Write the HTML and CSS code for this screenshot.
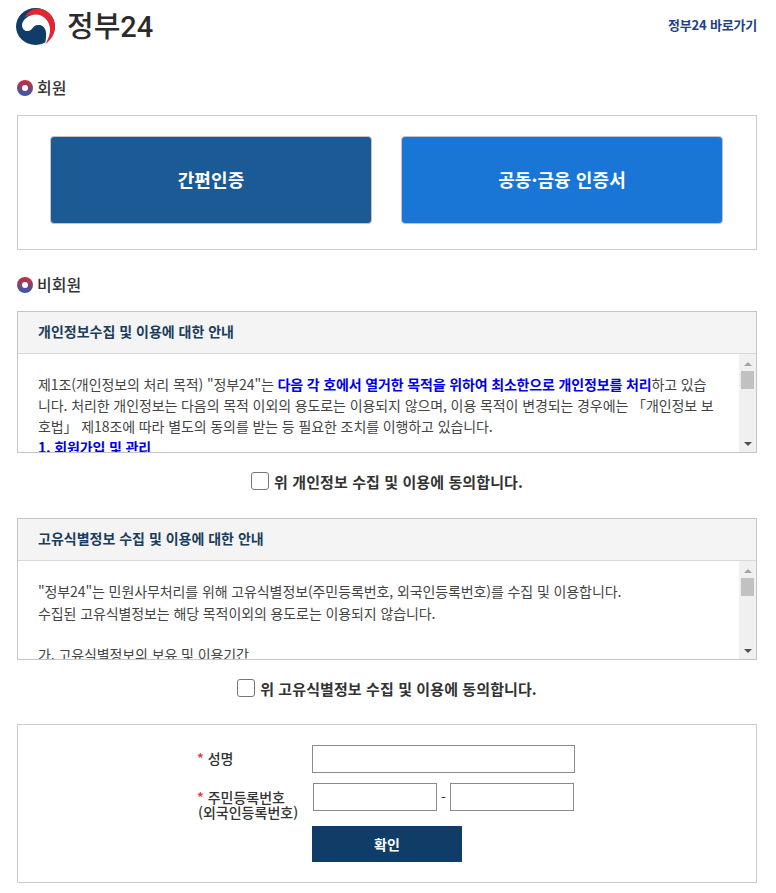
FILE: index.html
```html
<!DOCTYPE html>
<html lang="ko">
<head>
    <meta charset="UTF-8">
    <meta name="viewport" content="width=device-width, initial-scale=1.0">
    <title>정부24 본인확인</title>
    <link rel="stylesheet" href="styles.css">
</head>
<body>
    <header class="top">
        <div class="brand">
            <svg class="emblem" width="40" height="38" viewBox="16 8 40 38">
                <ellipse cx="35.5" cy="26.5" rx="19.5" ry="18.5" fill="#0f3d68"/>
                <path d="M24.5 17.5C28 11 34 8 39.5 8.6C49 10 55 18 55 26.500C55 34 51 40 45 44.500C49 38 50.500 33 50 28C49 20 43 14.500 36 14.500C31 14.500 27 15.500 24.500 17.500z" fill="#e5252f"/>
                <path d="M45 44.500C49 38 50.500 33 50 28C49 20 43 14.500 36 14.500C28 14.500 22.500 20 22 25C22 29 25 31.500 28 31C31 30.500 32 28.500 33.500 27C36 24.500 40 24.500 43 26.500C46 29 46.500 33 46 37C45.800 39.500 45.500 42 45 44.500z" fill="#fff"/>
            </svg>
            <span class="brand-name">정부24</span>
        </div>
        <a href="#" class="shortcut">정부24 바로가기</a>
    </header>

    <h2 class="sec-title"><span class="ring"></span>회원</h2>
    <div class="member-box">
        <a href="#" class="auth-btn simple">간편인증</a>
        <a href="#" class="auth-btn cert">공동·금융 인증서</a>
    </div>

    <h2 class="sec-title guest"><span class="ring"></span>비회원</h2>

    <section class="terms">
        <h3 class="terms-head">개인정보수집 및 이용에 대한 안내</h3>
        <div class="terms-body">
            <div class="terms-text">
                <p>제1조(개인정보의 처리 목적) "정부24"는 <b class="blue">다음 각 호에서 열거한 목적을 위하여 최소한으로 개인정보를 처리</b>하고 있습니다. 처리한 개인정보는 다음의 목적 이외의 용도로는 이용되지 않으며, 이용 목적이 변경되는 경우에는 「개인정보 보호법」 제18조에 따라 별도의 동의를 받는 등 필요한 조치를 이행하고 있습니다.</p>
                <p><b class="blue">1. 회원가입 및 관리</b></p>
            </div>
            <div class="scrollbar"><span class="arrow up"></span><span class="thumb"></span><span class="arrow down"></span></div>
        </div>
    </section>
    <label class="agree"><input type="checkbox"><span>위 개인정보 수집 및 이용에 동의합니다.</span></label>

    <section class="terms">
        <h3 class="terms-head">고유식별정보 수집 및 이용에 대한 안내</h3>
        <div class="terms-body">
            <div class="terms-text">
                <p class="tall">"정부24"는 민원사무처리를 위해 고유식별정보(주민등록번호, 외국인등록번호)를 수집 및 이용합니다.</p>
                <p>수집된 고유식별정보는 해당 목적이외의 용도로는 이용되지 않습니다.</p>
                <p class="gap">가. 고유식별정보의 보유 및 이용기간</p>
            </div>
            <div class="scrollbar"><span class="arrow up"></span><span class="thumb"></span><span class="arrow down"></span></div>
        </div>
    </section>
    <label class="agree"><input type="checkbox"><span>위 고유식별정보 수집 및 이용에 동의합니다.</span></label>

    <form class="id-form">
        <div class="form-row">
            <label class="field-name" for="user-name"><i>*</i> 성명</label>
            <input type="text" id="user-name" class="wide">
        </div>
        <div class="form-row rrn-row">
            <label class="field-name" for="rrn1"><i>*</i> 주민등록번호<br>(외국인등록번호)</label>
            <div class="rrn">
                <input type="text" id="rrn1">
                <span>-</span>
                <input type="text" id="rrn2">
            </div>
        </div>
        <button type="button" class="confirm">확인</button>
    </form>
</body>
</html>
```

FILE: styles.css
```css
* {
    box-sizing: border-box;
}
body {
    font-family: "Noto Sans CJK KR", "Noto Sans", sans-serif;
    margin: 0;
    padding: 0 19px 10px 17px;
    background-color: #fff;
    color: #333;
    font-size: 14px;
}
a {
    text-decoration: none;
}
.top {
    display: flex;
    justify-content: space-between;
    align-items: center;
    height: 54px;
}
.brand {
    display: flex;
    align-items: center;
    gap: 11px;
    margin-left: -1px;
}
.brand-name {
    font-family: Roboto, "Noto Sans CJK KR", sans-serif;
    font-size: 29px;
    font-weight: 500;
    color: #2b2b2b;
    line-height: 1;
}
.shortcut {
    color: #1f3f86;
    font-size: 13px;
    font-weight: 700;
    letter-spacing: -0.2px;
    margin-top: -6px;
}
.sec-title {
    display: flex;
    align-items: center;
    gap: 4px;
    margin: 21px 0 15px;
    height: 25px;
    padding-bottom: 2px;
    font-size: 16px;
    font-weight: 500;
    color: #333;
}
.sec-title.guest {
    margin: 22px 0 14px;
}
.ring {
    width: 16px;
    height: 16px;
    margin-top: 2px;
    border-radius: 50%;
    background: linear-gradient(180deg, #d42a35 0%, #2a5cb8 100%);
    position: relative;
    flex: none;
}
.ring::after {
    content: "";
    position: absolute;
    left: 5px;
    top: 5px;
    width: 6px;
    height: 6px;
    border-radius: 50%;
    background: #fff;
}
.member-box {
    display: flex;
    justify-content: space-between;
    height: 135px;
    padding: 20px 33px 25px 32px;
    border: 1px solid #ccc;
}
.auth-btn {
    width: 322px;
    padding-bottom: 3px;
    border: 1px solid #c4c4c4;
    border-radius: 4px;
    color: #fff;
    font-size: 18px;
    font-weight: 700;
    letter-spacing: 0.1px;
    display: flex;
    align-items: center;
    justify-content: center;
}
.simple {
    background-color: #1c5a96;
}
.cert {
    background-color: #1976d6;
}
.terms {
    border: 1px solid #c4c4c4;
    height: 142px;
    overflow: hidden;
}
.terms-head {
    margin: 0;
    height: 42px;
    padding: 0 0 3px 20px;
    display: flex;
    align-items: center;
    background-color: #f4f4f4;
    border-bottom: 1px solid #d8d8d8;
    font-size: 14px;
    font-weight: 700;
    color: #1a3d5c;
}
.terms-body {
    display: flex;
    height: 98px;
}
.terms-text {
    flex: 1;
    overflow: hidden;
    padding: 20px 21px 0 20px;
    line-height: 21px;
    letter-spacing: -0.1px;
    color: #444;
}
.terms-text p {
    margin: 0;
}
.terms-text .tall {
    margin-bottom: 1px;
}
.terms-text .gap {
    margin-top: 20px;
}
.blue {
    color: #0000e6;
    font-weight: 700;
    letter-spacing: -0.15px;
}
.scrollbar {
    width: 17px;
    flex: none;
    background-color: #f0f0f0;
    display: flex;
    flex-direction: column;
    align-items: center;
    padding: 8px 0 6px;
}
.arrow {
    width: 0;
    height: 0;
    border-left: 4px solid transparent;
    border-right: 4px solid transparent;
}
.arrow.up {
    border-bottom: 4px solid #a3a3a3;
}
.arrow.down {
    border-top: 4px solid #505050;
    margin-top: auto;
}
.thumb {
    width: 13px;
    height: 18px;
    margin-top: 5px;
    background-color: #c1c1c1;
}
.agree {
    display: flex;
    justify-content: center;
    align-items: center;
    gap: 5px;
    height: 65px;
    padding-bottom: 9px;
    font-size: 15px;
    font-weight: 700;
    letter-spacing: 0.1px;
    color: #333;
}
.agree input {
    appearance: none;
    width: 18px;
    height: 18px;
    margin: 0;
    background: #fff;
    border: 1px solid #767676;
    border-radius: 3px;
}
.id-form {
    border: 1px solid #ccc;
    height: 159px;
    margin-top: -1px;
    padding: 20px 0 0 180px;
}
.form-row {
    display: flex;
    align-items: flex-start;
    margin-bottom: 10px;
}
.form-row:first-child .field-name {
    padding-top: 6px;
}
.rrn-row {
    margin-bottom: 6px;
}
.field-name {
    width: 114px;
    font-size: 14px;
    font-weight: 500;
    line-height: 15px;
    padding-top: 7px;
    color: #333;
}
.field-name i {
    color: #e8303c;
    font-style: normal;
    margin-left: -1px;
}
input[type="text"] {
    height: 28px;
    border: 1px solid #8a8a8a;
    background: #fff;
    padding: 0 4px;
}
.wide {
    width: 263px;
}
.rrn {
    display: flex;
    align-items: center;
    padding-left: 1px;
}
.rrn input {
    width: 124px;
}
.rrn span {
    width: 13px;
    text-align: center;
    color: #333;
}
.confirm {
    display: block;
    width: 150px;
    height: 36px;
    margin-left: 114px;
    padding-bottom: 1px;
    border: none;
    background-color: #0f3d68;
    color: #fff;
    font-family: inherit;
    font-size: 14px;
    font-weight: 700;
}
```
